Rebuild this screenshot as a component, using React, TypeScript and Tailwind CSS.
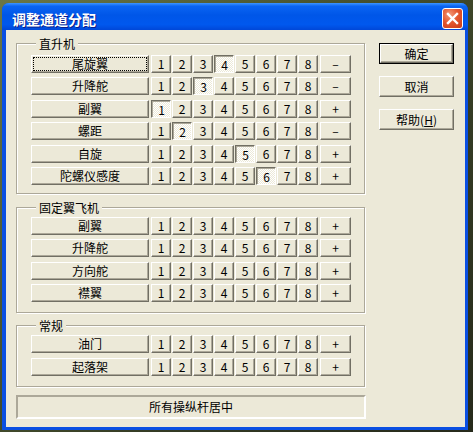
import React from "react";

type Row = { name: string; on?: number; sign: string };

const heliRows: Row[] = [
  { name: "尾旋翼", on: 4, sign: "–" },
  { name: "升降舵", on: 3, sign: "–" },
  { name: "副翼", on: 1, sign: "+" },
  { name: "螺距", on: 2, sign: "–" },
  { name: "自旋", on: 5, sign: "+" },
  { name: "陀螺仪感度", on: 6, sign: "+" },
];

const planeRows: Row[] = [
  { name: "副翼", sign: "+" },
  { name: "升降舵", sign: "+" },
  { name: "方向舵", sign: "+" },
  { name: "襟翼", sign: "+" },
];

const basicRows: Row[] = [
  { name: "油门", sign: "+" },
  { name: "起落架", sign: "+" },
];

const raised =
  "border border-t-white border-l-white border-r-[#716F64] border-b-[#716F64] shadow-[inset_-1px_-1px_0_#ACA899] bg-[#ECE9D8]";
const sunken =
  "border border-t-[#716F64] border-l-[#716F64] border-r-white border-b-white shadow-[inset_1px_1px_0_#ACA899] bg-[conic-gradient(#fff_25%,#ECE9D8_0_50%,#fff_0_75%,#ECE9D8_0)] bg-[length:2px_2px] pt-[2px] pl-[1px]";

function Key({
  label,
  pressed,
  focus,
  className,
}: {
  label: React.ReactNode;
  pressed?: boolean;
  focus?: boolean;
  className: string;
}) {
  return (
    <div
      className={`${className} ${pressed ? sunken : raised} ${
        focus ? "outline outline-1 outline-dotted outline-black outline-offset-[-3px]" : ""
      } flex h-[18px] shrink-0 items-center justify-center text-[12px] leading-none text-black`}
    >
      {label}
    </div>
  );
}

function ChannelRow({ row, focus }: { row: Row; focus?: boolean }) {
  return (
    <div className="flex">
      <Key label={row.name} focus={focus} className="w-[118px] mr-[2px]" />
      <div className="flex gap-[1px]">
        {[1, 2, 3, 4, 5, 6, 7, 8].map((n) => (
          <Key key={n} label={n} pressed={row.on === n} className="w-[20px]" />
        ))}
        <Key label={row.sign} className="w-[31px] ml-[1px]" />
      </div>
    </div>
  );
}

function Group({
  title,
  rows,
  className,
  gap,
  withFocus,
}: {
  title: string;
  rows: Row[];
  className: string;
  gap: string;
  withFocus?: boolean;
}) {
  return (
    <fieldset
      className={`w-[349px] border border-[#ACA899] shadow-[1px_1px_0_#fff,inset_1px_1px_0_#fff] pl-[14px] ${className}`}
    >
      <legend className="ml-[5px] bg-[#ECE9D8] px-[3px] text-[12px] leading-[13px] text-black">
        {title}
      </legend>
      <div className={`flex flex-col ${gap}`}>
        {rows.map((r, i) => (
          <ChannelRow key={r.name + i} row={r} focus={withFocus && i === 0} />
        ))}
      </div>
    </fieldset>
  );
}

function SideButton({ children, isDefault }: { children: React.ReactNode; isDefault?: boolean }) {
  if (isDefault) {
    return (
      <div className="h-[21px] w-[75px] border border-black">
        <div className={`${raised} flex h-full w-full items-center justify-center text-[12px] leading-none`}>
          {children}
        </div>
      </div>
    );
  }
  return (
    <div className={`${raised} flex h-[21px] w-[75px] items-center justify-center text-[12px] leading-none`}>
      {children}
    </div>
  );
}

export default function App() {
  return (
    <div className="h-[432px] w-[473px] overflow-hidden bg-[linear-gradient(135deg,#6a7647_0%,#4a5530_35%,#343b24_65%,#262a1b_100%)] pl-[2px] pt-[3px] font-['Noto_Sans_CJK_SC',sans-serif]">
      <div className="flex h-[427px] w-[466px] flex-col overflow-hidden rounded-t-[7px] bg-[#0A4FE2]">
        {/* title bar */}
        <div className="flex h-[27px] shrink-0 items-start bg-[linear-gradient(to_bottom,#3D95FF_0%,#0A64F2_12%,#0056E8_45%,#0058EE_80%,#0047D8_100%)]">
          <span className="ml-[10px] mt-[8px] text-[14px] font-bold leading-[16px] text-white [text-shadow:1px_1px_0_#0A1E8C]">
            调整通道分配
          </span>
          <div className="ml-auto mr-[5px] mt-[5px] flex h-[21px] w-[21px] items-center justify-center rounded-[3px] border border-white bg-[radial-gradient(circle_at_35%_30%,#F29A7A_0%,#E4572F_45%,#C83A18_100%)]">
            <svg width="13" height="13" viewBox="0 0 13 13">
              <path d="M2 2 L11 11 M11 2 L2 11" stroke="#fff" strokeWidth="2.4" strokeLinecap="square" />
            </svg>
          </div>
        </div>
        {/* client area */}
        <div className="mb-[3px] ml-[4px] mr-[3px] flex flex-1 bg-[#ECE9D8] pl-[10px] pt-[7px] text-black">
          <div className="flex w-[350px] flex-col">
            <Group title="直升机" rows={heliRows} className="pt-[5px] pb-[8px]" gap="gap-[4.4px]" withFocus />
            <Group title="固定翼飞机" rows={planeRows} className="mt-[7px] pt-[3px] pb-[10px]" gap="gap-[4.33px]" />
            <Group title="常规" rows={basicRows} className="mt-[6px] pt-[3px] pb-[10px]" gap="gap-[5px]" />
            <div className="mt-[8px] flex h-[24px] w-[350px] items-center justify-center border-2 border-t-[#ACA899] border-l-[#ACA899] border-r-white border-b-white text-[12px] leading-none">
              所有操纵杆居中
            </div>
          </div>
          <div className="ml-[13px] mt-[6px] flex w-[75px] flex-col gap-[12px]">
            <SideButton isDefault>确定</SideButton>
            <SideButton>取消</SideButton>
            <SideButton>
              <span>
                帮助(<span className="underline">H</span>)
              </span>
            </SideButton>
          </div>
        </div>
      </div>
    </div>
  );
}
